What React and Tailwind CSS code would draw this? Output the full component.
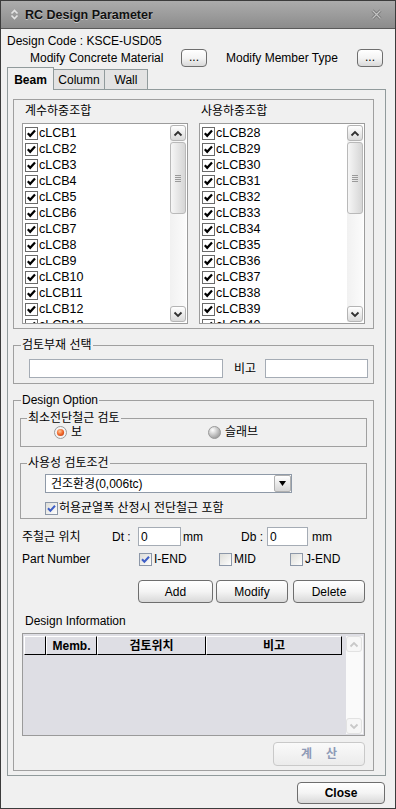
import React from "react";

const leftItems = Array.from({ length: 13 }, (_, i) => `cLCB${i + 1}`);
const rightItems = Array.from({ length: 13 }, (_, i) => `cLCB${i + 28}`);

const ListCheck = () => (
  <svg width="13" height="13" viewBox="0 0 13 13" className="shrink-0">
    <rect x="0.5" y="0.5" width="12" height="12" fill="#fff" stroke="#6a6a6a" />
    <path d="M2.8 6.2 L5.2 8.8 L10 3.4" fill="none" stroke="#000" strokeWidth="2.2" />
  </svg>
);

const XpCheck = ({ checked }) => (
  <svg width="13" height="13" viewBox="0 0 13 13" className="shrink-0">
    <defs>
      <linearGradient id="xpc" x1="0" y1="0" x2="1" y2="1">
        <stop offset="0" stopColor="#dcdcd7" />
        <stop offset="1" stopColor="#ffffff" />
      </linearGradient>
    </defs>
    <rect x="0.5" y="0.5" width="12" height="12" fill="url(#xpc)" stroke="#8c97a8" />
    {checked && (
      <path d="M3 6.2 L5.4 8.8 L10 3.8" fill="none" stroke="#3f5fc6" strokeWidth="2" />
    )}
  </svg>
);

const Radio = ({ on }) => (
  <svg width="13" height="13" viewBox="0 0 13 13" className="shrink-0">
    <defs>
      <radialGradient id="roff" cx="35%" cy="30%" r="80%">
        <stop offset="0" stopColor="#ffffff" />
        <stop offset="1" stopColor="#909090" />
      </radialGradient>
      <radialGradient id="ron" cx="40%" cy="35%" r="70%">
        <stop offset="0" stopColor="#ffc89a" />
        <stop offset="0.6" stopColor="#f26a2c" />
        <stop offset="1" stopColor="#c8461a" />
      </radialGradient>
    </defs>
    <circle cx="6.5" cy="6.5" r="6" fill={on ? "#f4f4f4" : "url(#roff)"} stroke="#9a9a9a" />
    {on && <circle cx="6.5" cy="6.5" r="3.6" fill="url(#ron)" />}
  </svg>
);

const Chevron = ({ up, color = "#303030" }) => (
  <svg width="10" height="7" viewBox="0 0 10 7">
    <path
      d={up ? "M1.5 5.5 L5 2 L8.5 5.5" : "M1.5 1.5 L5 5 L8.5 1.5"}
      fill="none"
      stroke={color}
      strokeWidth="1.8"
    />
  </svg>
);

const ScrollBtn = ({ up, disabled }) => (
  <div
    className={`flex h-[16px] w-[16px] items-center justify-center rounded-[3px] border ${
      disabled ? "border-[#e2e2e2] bg-[#f6f6f6]" : "border-[#b4b4b4] bg-linear-to-b from-white to-[#dadada]"
    }`}
  >
    <Chevron up={up} color={disabled ? "#c8c8c8" : "#303030"} />
  </div>
);

const ListScroll = () => (
  <div className="my-[1px] mr-[1px] flex w-[16px] flex-col bg-linear-to-r from-[#f1f1f1] to-[#fbfbfb]">
    <ScrollBtn up />
    <div className="mt-[1px] flex h-[72px] w-[16px] items-center justify-center rounded-[3px] border border-[#b9b9b9] bg-linear-to-r from-[#f6f6f6] to-[#d6d6d6]">
      <div className="flex flex-col gap-[1px]">
        <div className="h-px w-[6px] bg-[#9a9a9a]" />
        <div className="h-px w-[6px] bg-[#9a9a9a]" />
        <div className="h-px w-[6px] bg-[#9a9a9a]" />
        <div className="h-px w-[6px] bg-[#9a9a9a]" />
      </div>
    </div>
    <div className="flex-1" />
    <ScrollBtn />
  </div>
);

const CheckList = ({ items }) => (
  <div className="flex h-[201px] w-[166px] border border-[#9c9c9c] bg-white">
    <div className="flex-1 overflow-hidden pl-[2px] pt-[1px]">
      {items.map((t) => (
        <div key={t} className="flex h-[16px] items-center gap-[1px]">
          <ListCheck />
          <span className="text-[12.5px] leading-[16px]">{t}</span>
        </div>
      ))}
    </div>
    <ListScroll />
  </div>
);

const Btn = ({ children, className = "" }) => (
  <div
    className={`flex items-center justify-center rounded-[4px] border border-[#6e6e6e] bg-linear-to-b from-white via-[#f4f4f4] to-[#d9d9d9] ${className}`}
  >
    {children}
  </div>
);

const Field = ({ className = "", children }) => (
  <div className={`flex h-[19px] items-center border border-[#a5acb5] bg-white ${className}`}>{children}</div>
);

export default function App() {
  return (
    <div className="flex h-[809px] w-[396px] flex-col overflow-hidden border border-[#3c3c3c] bg-[#f0f0f0] font-['Liberation_Sans','Noto_Sans_CJK_KR',sans-serif] text-[12px] leading-[14px] text-black">
      {/* title bar */}
      <div className="flex h-[28px] shrink-0 items-center border-b border-[#5a5a5a] bg-linear-to-b from-[#acacac] to-[#8c8c8c] pl-[9px] pr-[13px]">
        <svg width="9" height="11" viewBox="0 0 9 11">
          <path d="M1.5 4.5 L4.5 1.5 L7.5 4.5" fill="none" stroke="#e4e4e4" strokeWidth="1.6" />
          <path d="M1.5 6.5 L4.5 9.5 L7.5 6.5" fill="none" stroke="#e4e4e4" strokeWidth="1.6" />
        </svg>
        <span className="ml-[6px] text-[12.5px] font-bold text-[#111] [text-shadow:0_1px_0_#c8c8c8]">
          RC Design Parameter
        </span>
        <div className="flex-1" />
        <svg width="11" height="11" viewBox="0 0 11 11">
          <path d="M1.5 1.5 L9.5 9.5 M9.5 1.5 L1.5 9.5" stroke="#6a6a6a" strokeWidth="2.6" />
          <path d="M1.5 1.5 L9.5 9.5 M9.5 1.5 L1.5 9.5" stroke="#c4c4c4" strokeWidth="1.4" />
        </svg>
      </div>

      <div className="flex flex-col pl-[6px]">
        <div className="pt-[5px]">Design Code : KSCE-USD05</div>

        {/* modify row */}
        <div className="mt-[1px] flex h-[18px] items-center">
          <span className="ml-[23px] w-[151px]">Modify Concrete Material</span>
          <Btn className="h-[18px] w-[26px] rounded-[3px] border-[#4a4a4a] pb-[3px] text-[12px]">...</Btn>
          <span className="ml-[19px] w-[131px]">Modify Member Type</span>
          <Btn className="h-[18px] w-[26px] rounded-[3px] border-[#4a4a4a] pb-[3px] text-[12px]">...</Btn>
        </div>

        {/* tabs */}
        <div className="flex h-[22px] items-end">
          <div className="relative z-10 -mb-px flex h-[23px] w-[47px] items-center justify-center border border-b-0 border-[#919b9c] bg-[#f0f0f0] pt-[2px] font-bold">
            Beam
          </div>
          <div className="flex h-[20px] w-[51px] items-center justify-center border border-b-0 border-l-0 border-[#919b9c] bg-[#e3e3e3]">
            Column
          </div>
          <div className="flex h-[20px] w-[43px] items-center justify-center border border-b-0 border-l-0 border-[#919b9c] bg-[#e3e3e3]">
            Wall
          </div>
        </div>

        {/* tab panel */}
        <div className="flex w-[379px] flex-col border border-[#919b9c] pb-[4px] pl-[5px]">
          {/* load combinations */}
          <div className="mt-[9px] flex h-[230px] w-[361px] gap-[11px] border border-[#a0a0a0] pl-[8px] pt-[4px]">
            <div className="flex flex-col">
              <div className="pl-[3px]">계수하중조합</div>
              <div className="mt-[5px]">
                <CheckList items={leftItems} />
              </div>
            </div>
            <div className="flex flex-col">
              <div className="pl-[2px]">사용하중조합</div>
              <div className="mt-[5px]">
                <CheckList items={rightItems} />
              </div>
            </div>
          </div>

          {/* member selection */}
          <fieldset className="mt-[9px] h-[46px] w-[361px] border border-[#a0a0a0] pt-[7px]">
            <legend className="ml-[7px] px-[1px] leading-[14px]">검토부재 선택</legend>
            <div className="flex items-center">
              <Field className="ml-[15px] w-[194px]" />
              <span className="ml-[11px] w-[31px]">비고</span>
              <Field className="w-[103px]" />
            </div>
          </fieldset>

          {/* design option */}
          <fieldset className="mt-[9px] h-[378px] w-[361px] border border-[#a0a0a0]">
            <legend className="ml-[7px] px-[1px] leading-[14px]">Design Option</legend>

            <fieldset className="ml-[6px] mt-[4px] h-[36px] w-[347px] border border-[#a0a0a0]">
              <legend className="ml-[6px] px-[1px] leading-[14px]">최소전단철근 검토</legend>
              <div className="flex h-[14px] items-center">
                <div className="ml-[33px] flex w-[154px] items-center gap-[4px]">
                  <Radio on />
                  <span>보</span>
                </div>
                <div className="flex items-center gap-[4px]">
                  <Radio />
                  <span>슬래브</span>
                </div>
              </div>
            </fieldset>

            <fieldset className="ml-[6px] mt-[9px] h-[63px] w-[347px] border border-[#a0a0a0] pt-[4px]">
              <legend className="ml-[6px] px-[1px] leading-[14px]">사용성 검토조건</legend>
              <div className="ml-[24px] flex h-[19px] w-[247px] items-center border border-[#8f9aa8] bg-white">
                <span className="flex-1 pl-[5px]">건조환경(0,006tc)</span>
                <div className="flex h-[17px] w-[17px] items-center justify-center rounded-[2px] border border-[#b0b0b0] bg-linear-to-b from-white to-[#d6d6d6]">
                  <svg width="7" height="5" viewBox="0 0 7 5">
                    <path d="M0 0 H7 L3.5 5 Z" fill="#000" />
                  </svg>
                </div>
              </div>
              <div className="ml-[24px] mt-[8px] flex h-[14px] items-center gap-[1px]">
                <XpCheck checked />
                <span>허용균열폭 산정시 전단철근 포함</span>
              </div>
            </fieldset>

            {/* rebar position */}
            <div className="ml-[8px] mt-[8px] flex h-[19px] items-center">
              <span className="w-[90px]">주철근 위치</span>
              <span className="w-[26px]">Dt :</span>
              <Field className="w-[43px] pl-[2px]">0</Field>
              <span className="ml-[2px] w-[58px]">mm</span>
              <span className="w-[26px]">Db :</span>
              <Field className="w-[41px] pl-[2px]">0</Field>
              <span className="ml-[4px]">mm</span>
            </div>

            {/* part number */}
            <div className="ml-[8px] mt-[6px] flex h-[14px] items-center">
              <span className="w-[117px]">Part Number</span>
              <div className="flex w-[80px] items-center gap-[2px]">
                <XpCheck checked />
                <span>I-END</span>
              </div>
              <div className="flex w-[71px] items-center gap-[2px]">
                <XpCheck />
                <span>MID</span>
              </div>
              <div className="flex items-center gap-[2px]">
                <XpCheck />
                <span>J-END</span>
              </div>
            </div>

            {/* buttons */}
            <div className="ml-[124px] mt-[14px] flex h-[23px]">
              <Btn className="w-[75px]">Add</Btn>
              <Btn className="ml-[3px] w-[72px]">Modify</Btn>
              <Btn className="ml-[5px] w-[72px]">Delete</Btn>
            </div>

            <div className="ml-[11px] mt-[11px]">Design Information</div>

            {/* grid */}
            <div className="ml-[8px] mt-[5px] flex h-[103px] w-[343px] border border-[#9a9a9a] bg-[#dedee4] pl-px pt-[2px]">
              <div className="flex w-[322px] flex-col">
                <div className="flex h-[19px] font-bold">
                  <div className="w-[22px] border-b border-r border-t border-l border-b-black border-r-black border-l-white border-t-white" />
                  <div className="flex w-[51px] items-center justify-center border border-b-black border-r-black border-l-white border-t-white">
                    Memb.
                  </div>
                  <div className="flex w-[109px] items-center justify-center border border-b-black border-r-black border-l-white border-t-white">
                    검토위치
                  </div>
                  <div className="flex w-[136px] items-center justify-center border border-b-black border-r-black border-l-white border-t-white">
                    비고
                  </div>
                </div>
              </div>
              <div className="mb-px flex w-[17px] flex-col bg-[#fafafa]">
                <ScrollBtn up disabled />
                <div className="flex-1" />
                <ScrollBtn disabled />
              </div>
            </div>

            <div className="mt-[6px] flex justify-end pr-[8px]">
              <div className="flex h-[24px] w-[92px] items-center justify-center gap-[14px] rounded-[4px] border border-[#c9c9c9] bg-linear-to-b from-[#fafafa] to-[#ebebeb] font-bold text-[#8e9ab6]">
                <span>계</span>
                <span>산</span>
              </div>
            </div>
          </fieldset>
        </div>

        {/* close */}
        <div className="mt-[6px] flex justify-end pr-[10px]">
          <Btn className="h-[22px] w-[88px] border-[#4a4a4a] font-bold">Close</Btn>
        </div>
      </div>
    </div>
  );
}
